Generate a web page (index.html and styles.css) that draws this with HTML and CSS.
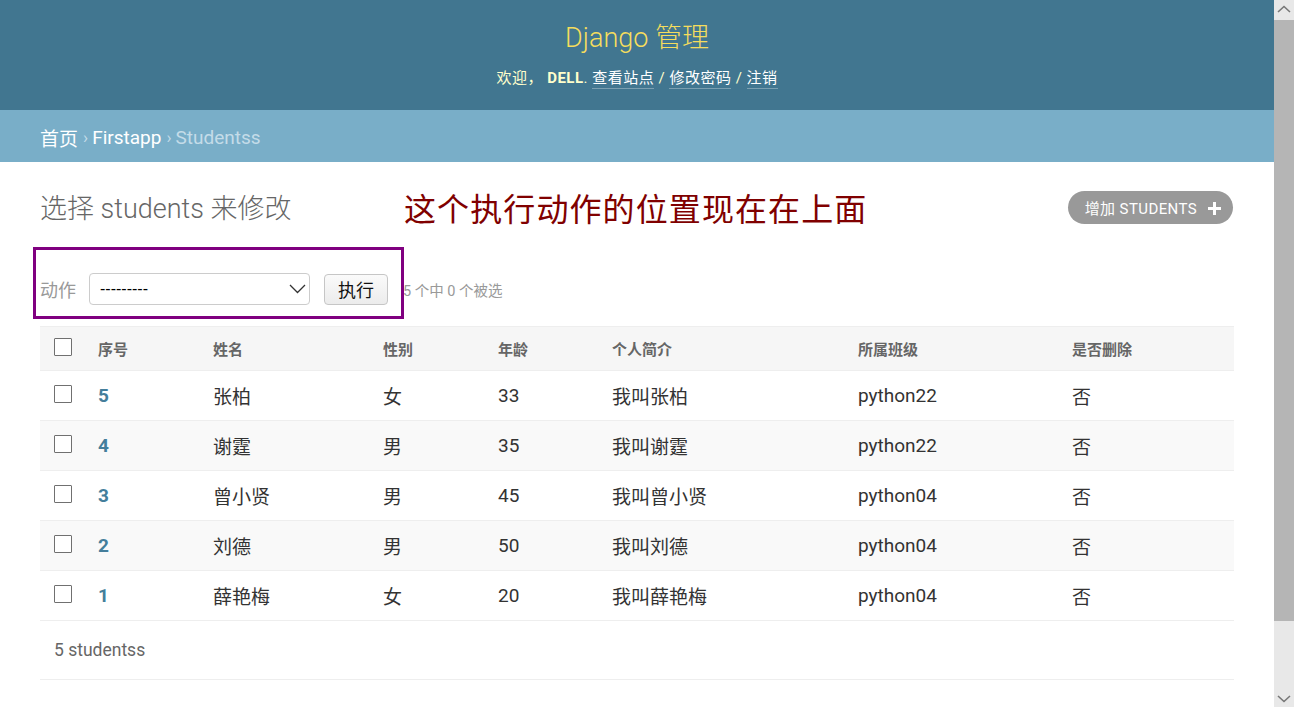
FILE: index.html
```html
<!DOCTYPE html>
<html lang="zh-CN">
<head>
<meta charset="utf-8">
<title>选择 students 来修改 | Django 站点管理员</title>
<link rel="stylesheet" href="styles.css">
</head>
<body>
<div class="page">
  <header class="header">
    <div class="branding">Django 管理</div>
    <div class="user-tools">欢迎， <strong>DELL</strong>. <a href="#">查看站点</a> / <a href="#">修改密码</a> / <a href="#">注销</a></div>
  </header>
  <nav class="breadcrumbs"><a href="#">首页</a><span class="sep">›</span><a href="#">Firstapp</a><span class="sep">›</span><span class="current">Studentss</span></nav>
  <main class="content">
    <div class="title-row">
      <h1 class="title">选择 students 来修改</h1>
      <a class="addlink" href="#">增加 STUDENTS
        <svg class="plus" width="13" height="13" viewBox="0 0 13 13"><path d="M5 0h3v5h5v3H8v5H5V8H0V5h5z" fill="#fff"/></svg>
      </a>
    </div>
    <div class="actions">
      <span class="action-label">动作</span>
      <div class="select">
        <span>---------</span>
        <svg class="chev" width="17" height="10" viewBox="0 0 17 10"><polyline points="1,1 8.5,8.5 16,1" fill="none" stroke="#333" stroke-width="1.3"/></svg>
      </div>
      <button class="go" type="button">执行</button>
      <span class="counter">5 个中 0 个被选</span>
    </div>
    <table class="result">
      <colgroup>
        <col class="c-check"><col class="c-id"><col class="c-name"><col class="c-sex"><col class="c-age"><col class="c-intro"><col class="c-class"><col class="c-del">
      </colgroup>
      <thead>
        <tr><th><span class="cb"></span></th><th>序号</th><th>姓名</th><th>性别</th><th>年龄</th><th>个人简介</th><th>所属班级</th><th>是否删除</th></tr>
      </thead>
      <tbody>
        <tr><td><span class="cb"></span></td><td><a class="id" href="#">5</a></td><td>张柏</td><td>女</td><td>33</td><td>我叫张柏</td><td>python22</td><td>否</td></tr>
        <tr class="alt"><td><span class="cb"></span></td><td><a class="id" href="#">4</a></td><td>谢霆</td><td>男</td><td>35</td><td>我叫谢霆</td><td>python22</td><td>否</td></tr>
        <tr><td><span class="cb"></span></td><td><a class="id" href="#">3</a></td><td>曾小贤</td><td>男</td><td>45</td><td>我叫曾小贤</td><td>python04</td><td>否</td></tr>
        <tr class="alt"><td><span class="cb"></span></td><td><a class="id" href="#">2</a></td><td>刘德</td><td>男</td><td>50</td><td>我叫刘德</td><td>python04</td><td>否</td></tr>
        <tr><td><span class="cb"></span></td><td><a class="id" href="#">1</a></td><td>薛艳梅</td><td>女</td><td>20</td><td>我叫薛艳梅</td><td>python04</td><td>否</td></tr>
      </tbody>
    </table>
    <p class="paginator">5 studentss</p>
  </main>
  <div class="note">这个执行动作的位置现在在上面</div>
  <div class="mark"></div>
</div>
<div class="scrollbar">
  <div class="sb-btn"><svg width="14" height="8" viewBox="0 0 14 8"><polyline points="1,7 7,1.5 13,7" fill="none" stroke="#777" stroke-width="1.6"/></svg></div>
  <div class="sb-thumb"></div>
  <div class="sb-track"></div>
  <div class="sb-btn"><svg width="14" height="8" viewBox="0 0 14 8"><polyline points="1,1 7,6.5 13,1" fill="none" stroke="#777" stroke-width="1.6"/></svg></div>
</div>
</body>
</html>
```

FILE: styles.css
```css
html, body {
  margin: 0;
  padding: 0;
  overflow: hidden;
  height: 100%;
}
body {
  font-family: Roboto, "Noto Sans CJK SC", sans-serif;
  color: #333;
  background: #fff;
}
.page {
  position: relative;
  width: 1274px;
}
a { text-decoration: none; }

.header {
  background: #417690;
  height: 110px;
  box-sizing: border-box;
  padding-top: 19px;
  display: flex;
  flex-direction: column;
  align-items: center;
}
.branding {
  color: #f5dd5d;
  font-size: 27px;
  font-weight: 300;
  line-height: 38px;
}
.user-tools {
  margin-top: 9px;
  color: #ffc;
  font-size: 15px;
  line-height: 24px;
  letter-spacing: 0.5px;
}
.user-tools strong { font-weight: 700; }
.user-tools a {
  color: #fff;
  border-bottom: 1px solid rgba(255,255,255,0.3);
  padding-bottom: 1px;
}

.breadcrumbs {
  background: #79aec8;
  height: 52px;
  box-sizing: border-box;
  padding: 2px 40px 0 40px;
  display: flex;
  align-items: center;
  font-size: 19px;
  color: #c4dce8;
}
.breadcrumbs a { color: #fff; }
.breadcrumbs .sep {
  margin: 0 4px 0 5px;
  font-size: 17px;
  color: #c4dce8;
}
.breadcrumbs .current { color: #c4dce8; }

.content {
  padding: 29px 40px 0 40px;
}
.title-row {
  display: flex;
  align-items: center;
  justify-content: space-between;
  height: 33px;
}
.title {
  margin: 0;
  font-size: 27px;
  font-weight: 300;
  color: #666;
  line-height: 33px;
  position: relative;
  top: 2px;
}
.addlink {
  display: flex;
  align-items: center;
  gap: 11px;
  height: 33px;
  box-sizing: border-box;
  padding: 0 12px 0 17px;
  margin-right: 1px;
  background: #999;
  border-radius: 17px;
  color: #fff;
  font-size: 15px;
  letter-spacing: 0.4px;
}
.plus { margin-top: 1px; }

.actions {
  margin-top: 49px;
  display: flex;
  align-items: center;
  height: 32px;
}
.action-label {
  color: #999;
  font-size: 18px;
  margin-right: 13px;
}
.select {
  width: 221px;
  height: 32px;
  box-sizing: border-box;
  border: 1px solid #ccc;
  border-radius: 4px;
  display: flex;
  align-items: center;
  justify-content: space-between;
  padding: 0 3px 0 10px;
  font-family: "Liberation Sans", sans-serif;
  font-size: 16px;
  color: #000;
}
.go {
  margin-left: 14px;
  width: 64px;
  height: 31px;
  border: 1px solid #c6c6c6;
  border-radius: 4px;
  background: linear-gradient(#fafafa, #ececec);
  font-family: Roboto, "Noto Sans CJK SC", sans-serif;
  font-size: 18px;
  color: #111;
  padding: 0;
}
.counter {
  margin-left: 15px;
  color: #999;
  font-size: 14.5px;
}

.result {
  margin-top: 21px;
  width: 100%;
  border-collapse: collapse;
  table-layout: fixed;
}
.c-check { width: 46px; }
.c-id { width: 115px; }
.c-name { width: 170px; }
.c-sex { width: 115px; }
.c-age { width: 114px; }
.c-intro { width: 246px; }
.c-class { width: 214px; }
.c-del { width: auto; }
.result th {
  background: #f6f6f6;
  border-top: 1px solid #eee;
  border-bottom: 1px solid #eee;
  height: 44px;
  padding: 0 12px;
  text-align: left;
  font-size: 15px;
  font-weight: 700;
  color: #666;
  box-sizing: border-box;
}
.result td {
  height: 50px;
  padding: 0 12px 1px 12px;
  border-bottom: 1px solid #eee;
  font-size: 19px;
  color: #333;
  box-sizing: border-box;
}
.result th:first-child, .result td:first-child { padding-left: 14px; }
.result tr.alt td { background: #f9f9f9; }
.cb {
  display: block;
  width: 18px;
  height: 18px;
  box-sizing: border-box;
  border: 1.5px solid #707070;
  border-radius: 1px;
  background: #fff;
}
.result th .cb { margin-top: -3px; }
.result td .cb { margin-top: -2px; }
.id {
  color: #447e9b;
  font-weight: 700;
}
.paginator {
  margin: 0;
  height: 59px;
  line-height: 58px;
  padding-left: 14px;
  box-sizing: border-box;
  border-bottom: 1px solid #eee;
  font-size: 17.5px;
  color: #666;
}

.note {
  position: absolute;
  left: 404px;
  top: 187px;
  font-family: "Noto Sans CJK SC", sans-serif;
  font-size: 32px;
  line-height: 40px;
  color: #800000;
  letter-spacing: 1.1px;
}
.mark {
  position: absolute;
  left: 33px;
  top: 247px;
  width: 371px;
  height: 72px;
  box-sizing: border-box;
  border: 3px solid #800080;
}

.scrollbar {
  position: fixed;
  top: 0;
  right: 0;
  width: 20px;
  height: 707px;
  display: flex;
  flex-direction: column;
  background: #e8e8e8;
}
.sb-btn {
  height: 17px;
  display: flex;
  align-items: center;
  justify-content: center;
  flex: none;
}
.sb-thumb {
  height: 601px;
  background: #b5b5b5;
  margin-top: 3px;
  flex: none;
}
.sb-track { flex: 1; }
```
